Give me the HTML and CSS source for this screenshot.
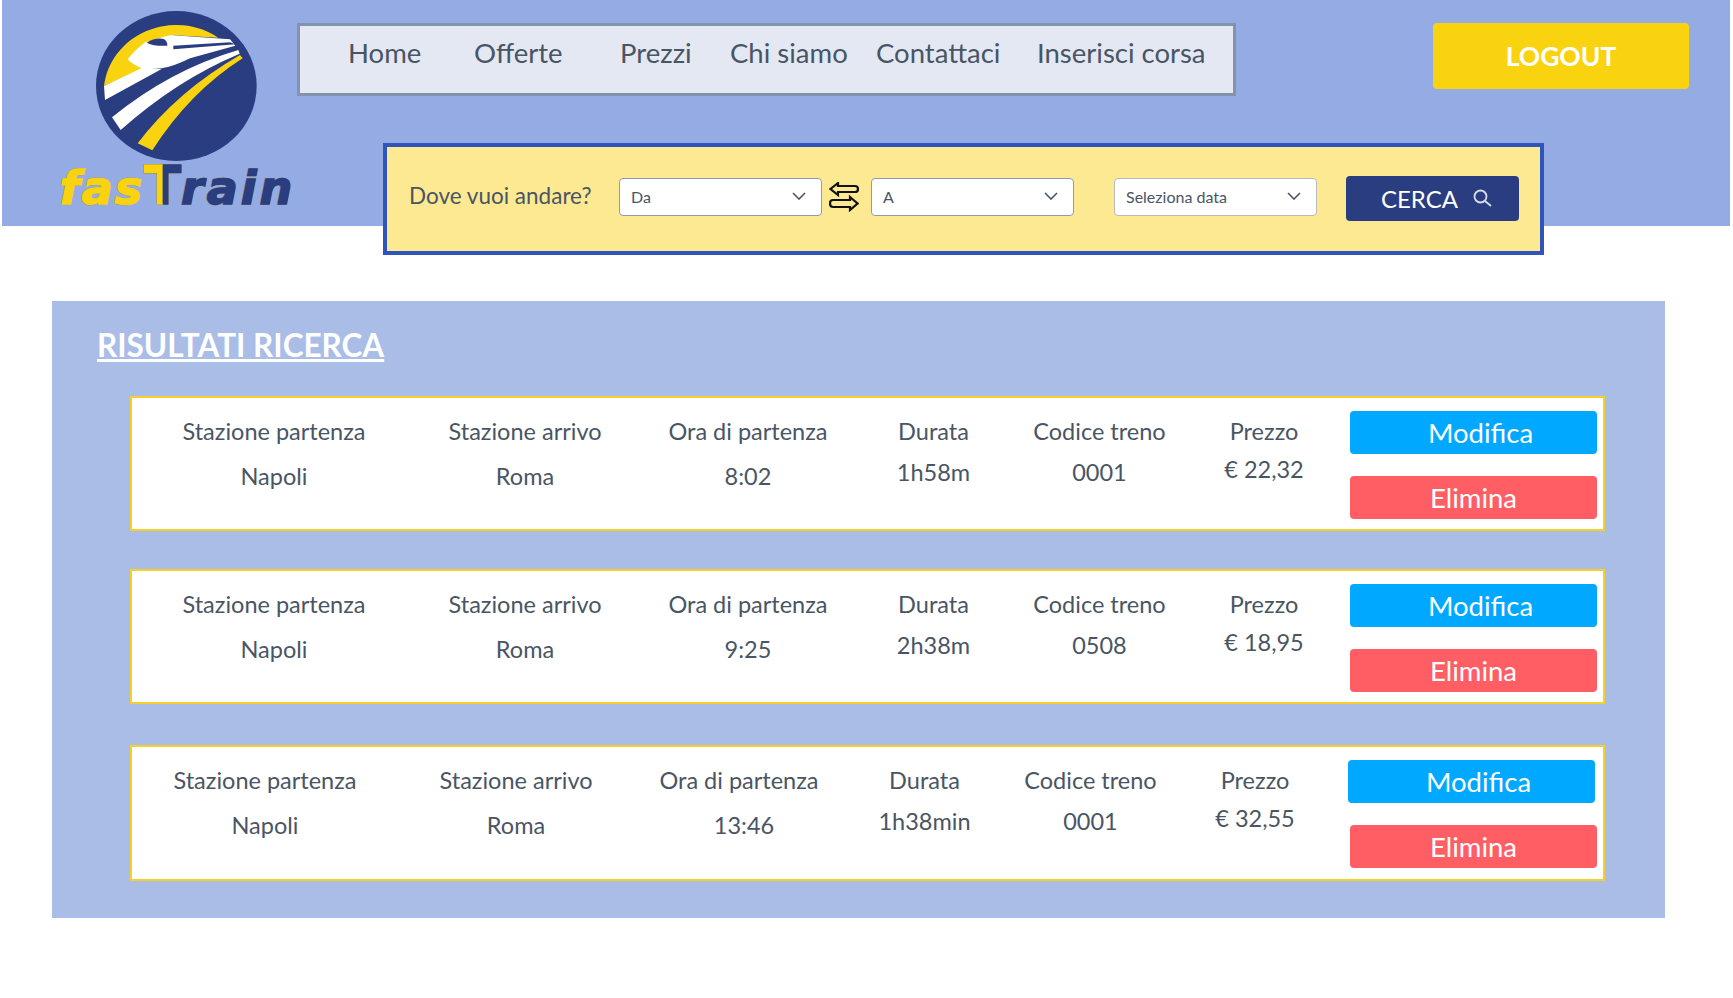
FILE: index.html
```html
<!DOCTYPE html>
<html>
  <head>
    <meta charset="utf-8" />
    <title>fasTrain - Risultati ricerca</title>
    <link rel="stylesheet" href="styles.css">
  </head>
  <body>
    <header class="header">
      <a class="brand" href="#">
        <svg class="brand-mark" viewBox="0 0 525 480" width="175" height="160">
          <ellipse cx="259" cy="243" rx="241" ry="225" fill="#293d80" />
          <path fill="#f9d30f" d="M42 243A218 205 0 0 1 385 98L240 90 113 163 160 190Z" />
          <path fill="#fff" d="M240 90L420 103 436 122 300 160Q250 185 215 190L160 192Q125 178 113 163 130 140 165 112Z" />
          <path fill="#fff" d="M160 187L215 192 45 285 42 243Z" />
          <path fill="#293d80" d="M170 113Q195 97 222 102 233 110 232 122 195 125 170 113Z" />
          <path fill="#293d80" d="M250 122L420 112 436 118 250 133Z" />
          <path fill="#fff" d="M66 337Q240 195 445 135L449 146Q260 225 92 375Z" />
          <path fill="#f9d30f" d="M143 415Q260 260 450 150L458 160Q300 260 187 436Z" />
        </svg>
        <span class="brand-name"><span class="brand-fas">fas</span><span class="brand-t">T</span><span class="brand-rain">rain</span></span>
      </a>
      <div class="head-main">
        <div class="head-top">
          <nav class="nav">
            <a href="#">Home</a>
            <a href="#">Offerte</a>
            <a href="#">Prezzi</a>
            <a href="#">Chi siamo</a>
            <a href="#">Contattaci</a>
            <a href="#">Inserisci corsa</a>
          </nav>
          <button type="button" class="logout">LOGOUT</button>
        </div>
        <form class="search">
          <span class="search-label">Dove vuoi andare?</span>
          <div class="picker picker-from">Da
            <svg class="chevron" viewBox="0 0 14 8" width="14" height="8"><path d="M1 1l6 6 6-6" /></svg>
          </div>
          <svg class="swap" viewBox="0 0 30 30" width="30" height="30">
            <path d="M9 1L1.500 7 9 13V10H26Q29 10 29 7 29 4 26 4H9Z" />
            <path d="M21 15L28.500 21.500 21 28V25H4Q1 25 1 21.500 1 18 4 18H21Z" />
          </svg>
          <div class="picker picker-to">A
            <svg class="chevron" viewBox="0 0 14 8" width="14" height="8"><path d="M1 1l6 6 6-6" /></svg>
          </div>
          <div class="picker picker-date">Seleziona data
            <svg class="chevron" viewBox="0 0 14 8" width="14" height="8"><path d="M1 1l6 6 6-6" /></svg>
          </div>
          <button type="button" class="search-btn">CERCA
            <svg viewBox="0 0 20 20" width="20" height="20"><circle cx="8.500" cy="8.500" r="6" /><path d="M13 13l6 5" /></svg>
          </button>
        </form>
      </div>
    </header>

    <main class="results">
      <h2 class="results-title">RISULTATI RICERCA</h2>

      <div class="trip trip-first">
        <div class="cols">
          <div class="col"><p>Stazione partenza</p><p class="val">Napoli</p></div>
          <div class="col"><p>Stazione arrivo</p><p class="val">Roma</p></div>
          <div class="col"><p>Ora di partenza</p><p class="val">8:02</p></div>
          <div class="col"><p>Durata</p><p class="val val-mid">1h58m</p></div>
          <div class="col"><p>Codice treno</p><p class="val val-mid">0001</p></div>
          <div class="col"><p>Prezzo</p><p class="val val-low">€ 22,32</p></div>
        </div>
        <div class="actions">
          <button type="button" class="btn btn-edit">Modifica</button>
          <button type="button" class="btn btn-del">Elimina</button>
        </div>
      </div>

      <div class="trip trip-second">
        <div class="cols">
          <div class="col"><p>Stazione partenza</p><p class="val">Napoli</p></div>
          <div class="col"><p>Stazione arrivo</p><p class="val">Roma</p></div>
          <div class="col"><p>Ora di partenza</p><p class="val">9:25</p></div>
          <div class="col"><p>Durata</p><p class="val val-mid">2h38m</p></div>
          <div class="col"><p>Codice treno</p><p class="val val-mid">0508</p></div>
          <div class="col"><p>Prezzo</p><p class="val val-low">€ 18,95</p></div>
        </div>
        <div class="actions">
          <button type="button" class="btn btn-edit">Modifica</button>
          <button type="button" class="btn btn-del">Elimina</button>
        </div>
      </div>

      <div class="trip trip-third">
        <div class="cols">
          <div class="col"><p>Stazione partenza</p><p class="val">Napoli</p></div>
          <div class="col"><p>Stazione arrivo</p><p class="val">Roma</p></div>
          <div class="col"><p>Ora di partenza</p><p class="val val-late">13:46</p></div>
          <div class="col"><p>Durata</p><p class="val val-mid">1h38min</p></div>
          <div class="col"><p>Codice treno</p><p class="val val-mid">0001</p></div>
          <div class="col"><p>Prezzo</p><p class="val val-low">€ 32,55</p></div>
        </div>
        <div class="actions">
          <button type="button" class="btn btn-edit">Modifica</button>
          <button type="button" class="btn btn-del">Elimina</button>
        </div>
      </div>
    </main>
  </body>
</html>
```

FILE: styles.css
```css
body {
  margin: 0;
  padding: 0;
  background-color: #fff;
  color: #4a5564;
  font-family: "Lato", sans-serif;
}
p {
  margin: 0;
}
a {
  color: inherit;
  text-decoration: none;
}
button {
  font-family: "Lato", sans-serif;
  border: 0;
  padding: 0;
  cursor: pointer;
}

/* header */
.header {
  display: flex;
  height: 226px;
  width: 1728px;
  margin-left: 2px;
  background-color: #94abe3;
}
.brand {
  display: flex;
  flex-direction: column;
  align-items: center;
  box-sizing: border-box;
  width: 235px;
  margin-left: 58px;
  padding-top: 5px;
}
.brand-mark {
  display: block;
  flex: none;
}
.brand-name {
  margin-top: -2px;
  font-family: "DejaVu Sans", sans-serif;
  font-weight: 700;
  font-style: italic;
  font-size: 46px;
  line-height: 46px;
  white-space: nowrap;
}
.brand-fas {
  color: #f9d30f;
  letter-spacing: 2px;
  -webkit-text-stroke: 1.5px #f9d30f;
  text-shadow: 1px 0 #8c8f8a, -1px 0 #8c8f8a, 0 1px #8c8f8a, 0 -1px #8c8f8a;
}
.brand-rain {
  color: #293d80;
  letter-spacing: 3px;
  -webkit-text-stroke: 1.5px #293d80;
  text-shadow: 1px 0 #a89c4a, -1px 0 #a89c4a, 0 1px #a89c4a, 0 -1px #a89c4a;
}
.brand-t {
  display: inline-block;
  position: relative;
  font-style: normal;
  font-size: 54px;
  color: #293d80;
  -webkit-text-stroke: 1.5px #293d80;
  text-shadow: 1px 0 #a89c4a, -1px 0 #a89c4a, 0 1px #a89c4a, 0 -1px #a89c4a;
}
/* left half of the T is yellow */
.brand-t::before {
  content: "T";
  position: absolute;
  top: 0;
  left: 0;
  color: #f9d30f;
  -webkit-text-stroke: 1.5px #f9d30f;
  text-shadow: none;
  clip-path: inset(-5px 50% -5px -5px);
}
.head-main {
  margin-left: 2px;
  padding-top: 23px;
}
.head-top {
  display: flex;
  align-items: flex-start;
}
.nav {
  display: grid;
  grid-template-columns: 126px 146px 110px 146px 161px auto;
  align-items: center;
  box-sizing: border-box;
  width: 939px;
  height: 73px;
  padding: 0 0 14px 48px;
  background-color: #e3e8f3;
  border: 3px solid #8393ad;
  font-size: 27.5px;
}
.logout {
  width: 256px;
  height: 66px;
  margin-left: 197px;
  background-color: #f9d30f;
  color: #fff;
  border-radius: 4px;
  font-size: 26.5px;
  font-weight: 700;
}

/* search bar */
.search {
  display: flex;
  align-items: center;
  box-sizing: border-box;
  width: 1161px;
  height: 112px;
  margin: 47px 0 0 86px;
  padding: 0 0 0 22px;
  background-color: #fce992;
  border: 4px solid #2f55bd;
}
.search-label {
  width: 210px;
  margin-bottom: 7px;
  font-size: 22.5px;
}
.picker {
  display: flex;
  align-items: center;
  justify-content: space-between;
  box-sizing: border-box;
  width: 203px;
  height: 38px;
  margin-bottom: 4px;
  padding: 0 15px 2px 11px;
  background-color: #fff;
  border: 1px solid #8d9bb5;
  border-radius: 4px;
  font-size: 16px;
}
.picker-date {
  margin-left: 40px;
  border-color: #bbb;
}
.chevron {
  fill: none;
  stroke: #4a5564;
  stroke-width: 1.6;
}
.swap {
  width: 30px;
  margin: 0 12px 4px 7px;
  fill: none;
  stroke: #111;
  stroke-width: 2.2;
}
.search-btn {
  display: flex;
  align-items: center;
  justify-content: center;
  gap: 14px;
  width: 173px;
  height: 45px;
  margin: 0 0 2px 29px;
  padding-left: 8px;
  background-color: #293d80;
  color: #fff;
  border-radius: 4px;
  font-size: 24px;
}
.search-btn svg {
  fill: none;
  stroke: #d8dde8;
  stroke-width: 1.8;
}

/* results */
.results {
  box-sizing: border-box;
  width: 1613px;
  height: 617px;
  margin: 75px 0 0 52px;
  padding: 22px 0 0 78px;
  background-color: #aabde7;
}
.results-title {
  margin: 0 0 28px -33px;
  color: #fff;
  font-size: 31.5px;
  line-height: 45px;
  font-weight: 700;
  text-decoration: underline;
}
.trip {
  display: flex;
  box-sizing: border-box;
  width: 1475px;
  height: 135px;
  background-color: #fff;
  border: 2px solid #f5cf2a;
}
.trip-second {
  margin-top: 38px;
}
.trip-third {
  height: 136px;
  margin-top: 41px;
}
.cols {
  display: grid;
  grid-template-columns: 284px 218px 228px 143px 189px 140px;
  width: 1218px;
  padding-top: 18px;
  font-size: 23.5px;
  line-height: 30px;
  text-align: center;
}
.trip-third .cols {
  margin-left: -9px;
  margin-right: 9px;
}
.val {
  margin-top: 15px;
}
.val-mid {
  margin-top: 11px;
}
.val-low {
  margin-top: 8px;
}
.val-late {
  padding-left: 10px;
}
.actions {
  display: flex;
  flex-direction: column;
  gap: 22px;
  padding-top: 13px;
}
.btn {
  width: 247px;
  height: 43px;
  color: #fff;
  border-radius: 4px;
  font-size: 27.5px;
}
.btn-edit {
  padding-left: 14px;
  background-color: #00a8ff;
}
.btn-del {
  background-color: #ff5f64;
}
.trip-third .btn-edit {
  margin-left: -2px;
}
```
